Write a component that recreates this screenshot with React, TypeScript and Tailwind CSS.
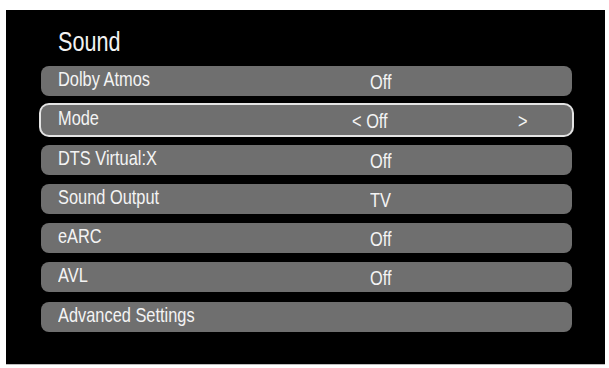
const rows = [
  { label: 'Dolby Atmos', value: 'Off' },
  { label: 'Mode', value: 'Off', selected: true },
  { label: 'DTS Virtual:X', value: 'Off' },
  { label: 'Sound Output', value: 'TV' },
  { label: 'eARC', value: 'Off' },
  { label: 'AVL', value: 'Off' },
  { label: 'Advanced Settings', value: '' },
]

// condensed TV-menu type, approximated by squeezing Liberation Sans
const squeeze = 'inline-block origin-left scale-x-[0.78] whitespace-nowrap'

export default function App() {
  return (
    <div className="h-[368px] w-[609px] bg-white pl-[6px] pt-[10px] font-['Liberation_Sans',Arial,sans-serif]">
      <div className="h-[355px] w-[599px] border-b border-[#bdbdbd] bg-black pl-[35px]">
        <h1 className="pl-[17px] pt-[18px] text-[27px] leading-[28px] text-[#f2f2f2]">
          <span className="inline-block origin-left scale-x-[0.8]">Sound</span>
        </h1>
        <div className="mt-[10px] flex w-[531px] flex-col gap-[9.3px]">
          {rows.map((row) => (
            <div
              key={row.label}
              className={[
                'flex h-[30px] items-start rounded-[8px] bg-[#6f6f6f] pl-[17px] text-[21px] leading-[20px] text-[#f4f4f4]',
                row.selected ? 'shadow-[0_0_0_2px_#e4e4e4]' : '',
              ].join(' ')}
            >
              <div className="w-[294px] pt-[3px]">
                <span className={squeeze}>{row.label}</span>
              </div>
              {row.selected ? (
                <div className="flex pt-[6px]">
                  <div className="w-[166px]">
                    <span className={squeeze}>&lt; {row.value}</span>
                  </div>
                  <span className={squeeze}>&gt;</span>
                </div>
              ) : (
                <div className="pl-[18px] pt-[6px]">
                  <span className={squeeze}>{row.value}</span>
                </div>
              )}
            </div>
          ))}
        </div>
      </div>
    </div>
  )
}
